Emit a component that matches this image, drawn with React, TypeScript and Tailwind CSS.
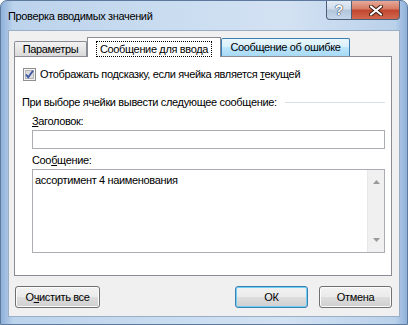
import React from 'react';

const font = "font-['Liberation_Sans',Arial,sans-serif] text-[11px] tracking-[-0.35px]";

function Checkbox() {
  return (
    <svg width="13" height="13" viewBox="0 0 13 13" className="shrink-0">
      <rect x="0.5" y="0.5" width="12" height="12" fill="#f4f4f4" stroke="#8e8f8f" />
      <rect x="2.5" y="2.5" width="8" height="8" fill="#dcdcdc" stroke="#b6b6b6" />
      <path d="M3 6.5 L5.2 9.2 L10 2.8" fill="none" stroke="#3a56a6" strokeWidth="1.8" />
    </svg>
  );
}

function Btn({ children, isDefault = false, className = '' }: { children: React.ReactNode; isDefault?: boolean; className?: string }) {
  return (
    <div
      className={`h-[22px] rounded-[3px] border flex items-center justify-center text-black whitespace-nowrap ${
        isDefault ? 'border-[#3c7fb1] shadow-[inset_0_0_0_1px_#6fd0f6]' : 'border-[#707070] shadow-[inset_0_0_0_1px_#fcfcfc]'
      } bg-[linear-gradient(#f2f2f2_0%,#ebebeb_50%,#dddddd_51%,#cfcfcf_100%)] ${className}`}
    >
      {children}
    </div>
  );
}

export default function App() {
  return (
    <div className={`w-[408px] h-[325px] overflow-hidden bg-white ${font}`}>
      <div className="w-[408px] h-[325px] rounded-t-[7px] border border-[#5d7a9e] bg-[linear-gradient(90deg,#8fb1da_0%,#bcd3ec_3%,#c9dcf0_40%,#d3e2f3_70%,#bad1ea_97%,#8fb1da_100%)] flex flex-col relative">
        {/* Title bar */}
        <div className="h-[29px] flex items-start">
          <div className="ml-[7px] mt-[7px] leading-[16px] text-black whitespace-nowrap">Проверка вводимых значений</div>
          <div className="ml-auto mr-[7px] flex">
            <div className="w-[26px] h-[19px] border border-[#4c5f78] border-t-0 rounded-bl-[4px] bg-[linear-gradient(#e3ecf6_0%,#cfdbea_45%,#b3c5da_50%,#c4d6ea_100%)] flex items-center justify-center text-[14px] tracking-normal font-bold text-white [text-shadow:0_0_1px_#2c3e58,0_0_1px_#2c3e58,0_0_1px_#2c3e58]">
              ?
            </div>
            <div className="w-[48px] h-[19px] border border-[#4c5f78] border-l-0 border-t-0 rounded-br-[4px] bg-[linear-gradient(#e7a998_0%,#d47a64_45%,#c2452d_50%,#d0694f_100%)] flex items-center justify-center">
              <svg width="14" height="11" viewBox="0 0 14 11">
                <path d="M2 1.5 L12 9.5 M12 1.5 L2 9.5" stroke="#3a1a12" strokeWidth="4" strokeLinecap="round" />
                <path d="M2 1.5 L12 9.5 M12 1.5 L2 9.5" stroke="#ffffff" strokeWidth="2.2" strokeLinecap="round" />
              </svg>
            </div>
          </div>
        </div>

        {/* Client area */}
        <div className="ml-[7px] mr-[7px] h-[287px] border border-[#9aaec6] bg-[#f0f0f0] flex flex-col">
          {/* Tabs */}
          <div className="mt-[6px] ml-[5px] h-[20px] flex items-end relative z-10 -mb-px whitespace-nowrap">
            <div className="w-[73px] h-[15px] mb-px border border-b-0 border-[#898c95] rounded-t-[2px] bg-[linear-gradient(#f2f2f2,#dadada)] flex items-center justify-center leading-none">
              Параметры
            </div>
            <div className="w-[134px] h-[20px] border border-b-0 border-[#898c95] bg-white flex items-start justify-center pt-[3px]">
              <div className="px-[3px] h-[16px] border border-dotted border-black flex items-center leading-none">
                Сообщение для ввода
              </div>
            </div>
            <div className="w-[129px] h-[18px] mb-px border border-b-0 border-[#3c7fb1] rounded-t-[2px] bg-[linear-gradient(#eaf6fd_0%,#d9f0fc_45%,#bee6fd_50%,#a7d9f5_100%)] flex items-center justify-center leading-none">
              Сообщение об ошибке
            </div>
          </div>

          {/* Panel */}
          <div className="ml-[5px] mr-[7px] h-[220px] border border-[#898c95] bg-white flex flex-col text-black whitespace-nowrap">
            <div className="mt-[11px] ml-[8px] flex items-center h-[13px] gap-[4px]">
              <Checkbox />
              <span className="leading-none">
                Отображать подсказку, если ячейка является <span className="underline">т</span>екущей
              </span>
            </div>
            <div className="mt-[14px] ml-[7px] mr-[6px] flex items-center h-[15px]">
              <span className="leading-[15px]">При выборе ячейки вывести следующее сообщение:</span>
              <div className="flex-1 ml-[8px] h-px bg-[#d5dfe5]" />
            </div>
            <div className="mt-[4px] ml-[17px] leading-[15px]">
              <span className="underline">З</span>аголовок:
            </div>
            <div className="mt-[1px] ml-[17px] mr-[6px] h-[19px] border border-[#abadb3] bg-white" />
            <div className="mt-[4px] ml-[17px] leading-[15px]">
              Соо<span className="underline">б</span>щение:
            </div>
            <div className="mt-[1px] ml-[17px] mr-[6px] h-[84px] border border-[#abadb3] bg-white flex">
              <div className="flex-1 pl-[2px] pt-[3px] leading-[15px]">ассортимент 4 наименования</div>
              <div className="w-[17px] bg-[#f0f0f0] border-l border-[#e8e8e8] flex flex-col items-center justify-between py-[10px]">
                <svg width="7" height="4" viewBox="0 0 7 4">
                  <path d="M0 4 L3.5 0 L7 4 Z" fill="#9a9a9a" />
                </svg>
                <svg width="7" height="4" viewBox="0 0 7 4">
                  <path d="M0 0 L3.5 4 L7 0 Z" fill="#9a9a9a" />
                </svg>
              </div>
            </div>
          </div>

          {/* Buttons */}
          <div className="mt-[10px] ml-[6px] mr-[7px] flex">
            <Btn className="w-[85px]">
              <span>
                О<span className="underline">ч</span>истить все
              </span>
            </Btn>
            <Btn isDefault className="w-[73px] ml-auto">
              ОК
            </Btn>
            <Btn className="w-[73px] ml-[11px]">Отмена</Btn>
          </div>
        </div>
      </div>
    </div>
  );
}
